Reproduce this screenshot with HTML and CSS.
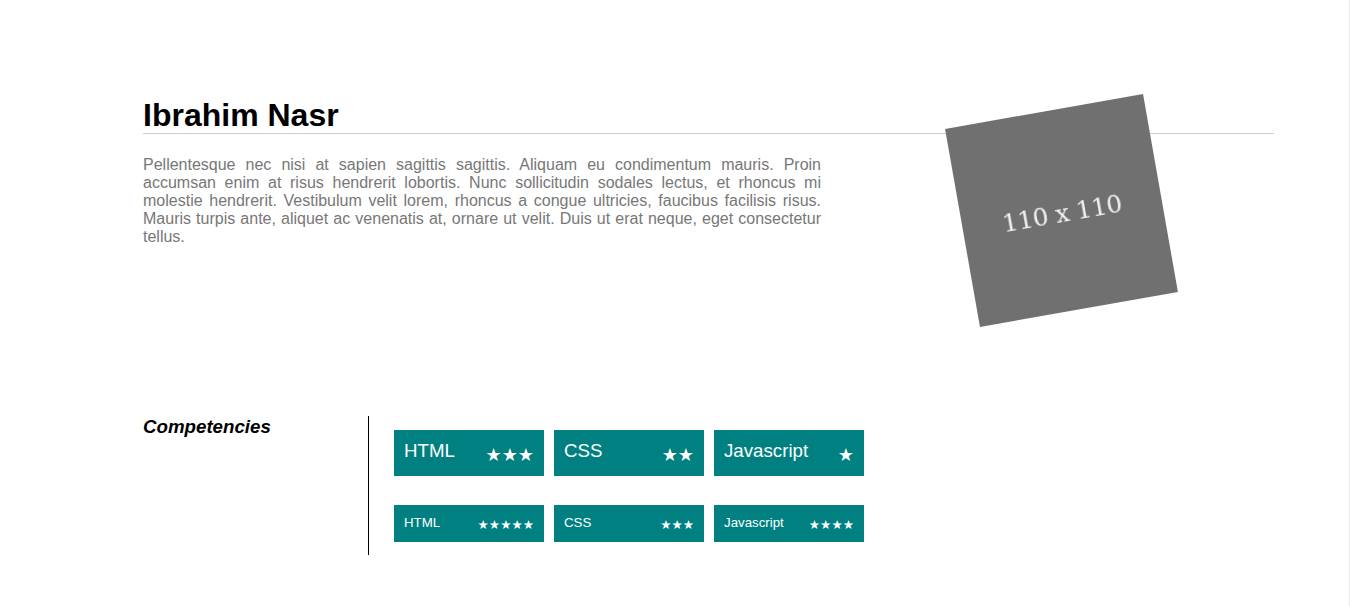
FILE: index.html
```html
<!DOCTYPE html>
<html lang="en">
<head>
<meta charset="utf-8">
<title>Ibrahim Nasr</title>
<link rel="stylesheet" href="styles.css">
</head>
<body>
<main class="resume">
  <header class="intro">
    <h1 class="name">Ibrahim Nasr</h1>
    <hr class="rule">
    <div class="intro-body">
      <p class="bio">Pellentesque nec nisi at sapien sagittis sagittis. Aliquam eu condimentum mauris. Proin accumsan enim at risus hendrerit lobortis. Nunc sollicitudin sodales lectus, et rhoncus mi molestie hendrerit. Vestibulum velit lorem, rhoncus a congue ultricies, faucibus facilisis risus. Mauris turpis ante, aliquet ac venenatis at, ornare ut velit. Duis ut erat neque, eget consectetur tellus.</p>
      <div class="photo"><span class="photo-label">110 x 110</span></div>
    </div>
  </header>
  <section class="competencies">
    <h3 class="section-title">Competencies</h3>
    <div class="skills">
      <ul class="skill-row large">
        <li class="skill"><span class="skill-name">HTML</span><span class="stars">★★★</span></li>
        <li class="skill"><span class="skill-name">CSS</span><span class="stars">★★</span></li>
        <li class="skill"><span class="skill-name">Javascript</span><span class="stars">★</span></li>
      </ul>
      <ul class="skill-row small">
        <li class="skill"><span class="skill-name">HTML</span><span class="stars">★★★★★</span></li>
        <li class="skill"><span class="skill-name">CSS</span><span class="stars">★★★</span></li>
        <li class="skill"><span class="skill-name">Javascript</span><span class="stars">★★★★</span></li>
      </ul>
    </div>
  </section>
</main>
</body>
</html>
```
FILE: styles.css
```css
html, body {
  margin: 0;
  padding: 0;
  background: #fff;
}

body {
  min-height: 100vh;
  box-sizing: border-box;
  border-right: 1px solid #ebebeb;
  font-family: "Liberation Sans", Arial, sans-serif;
  color: #000;
}

.resume {
  width: 1131px;
  padding: 97px 0 0 143px;
}

.name {
  margin: 0;
  font-size: 32px;
  line-height: 36px;
  font-weight: bold;
}

.rule {
  margin: 0;
  height: 0;
  border: 0;
  border-top: 1px solid #cccccc;
}

.intro-body {
  display: flex;
  align-items: flex-start;
}

.bio {
  width: 678px;
  margin: 22px 0 0;
  font-size: 16px;
  line-height: 18px;
  color: #777777;
  text-align: justify;
}

.photo {
  flex: none;
  width: 201px;
  height: 201px;
  margin: -24px 0 0 140px;
  background: #707070;
  transform: rotate(-10deg);
  display: flex;
  align-items: center;
  justify-content: center;
}

.photo-label {
  padding-top: 6px;
  font-family: "DejaVu Serif", "Liberation Serif", serif;
  font-size: 25px;
  letter-spacing: -0.5px;
  color: #f2f2f2;
  filter: blur(0.4px);
}

.competencies {
  display: grid;
  grid-template-columns: 225px 1fr;
  margin-top: 105px;
}

.section-title {
  margin: 0;
  font-size: 18.72px;
  line-height: 21px;
  font-weight: bold;
  font-style: italic;
}

.skills {
  border-left: 1px solid #000;
  padding: 14px 0 13px 25px;
}

.skill-row {
  display: flex;
  gap: 10px;
  margin: 0;
  padding: 0;
  list-style: none;
}

.skill {
  display: flex;
  justify-content: space-between;
  align-items: flex-start;
  box-sizing: border-box;
  width: 150px;
  padding: 0 10px 0 10px;
  background: #008080;
  color: #fff;
}

.stars {
  font-family: "DejaVu Sans", sans-serif;
}

.large .skill {
  height: 46px;
  font-size: 18.72px;
}

.large .skill-name {
  line-height: 21px;
  padding-top: 10px;
}

.large .stars {
  font-size: 18px;
  line-height: 21px;
  padding-top: 14px;
}

.small {
  margin-top: 29px;
}

.small .skill {
  height: 37px;
  font-size: 13.28px;
}

.small .skill-name {
  line-height: 15px;
  padding-top: 10px;
}

.small .stars {
  font-size: 12.6px;
  line-height: 15px;
  padding-top: 12px;
}
```
